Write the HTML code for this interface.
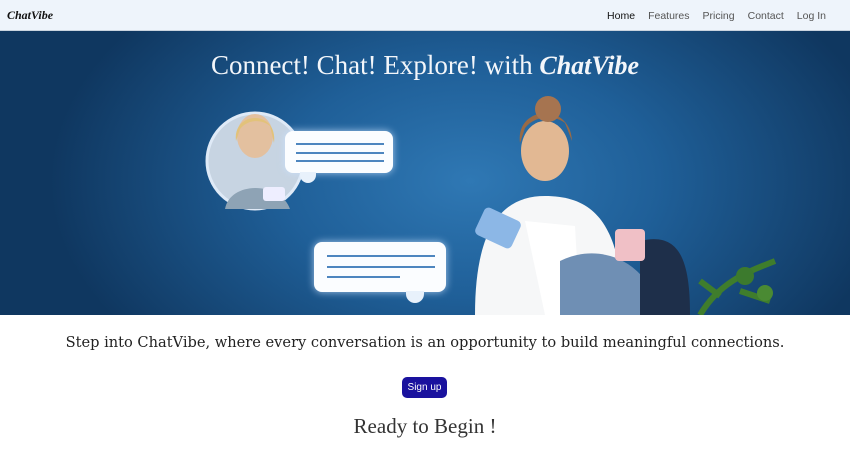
<!DOCTYPE html>
<html><head><meta charset="utf-8"><style>
*{margin:0;padding:0;box-sizing:border-box}
body{width:850px;height:473px;overflow:hidden;background:#fff;font-family:"Liberation Sans",sans-serif;position:relative}
.nav{position:absolute;top:0;left:0;width:850px;height:31px;background:#eef4fb;border-bottom:1px solid #c9d3de}
.logo{position:absolute;left:7px;top:8px;font:italic bold 12px "Liberation Serif",serif;color:#111}
.links{position:absolute;right:24px;top:10px;font-size:10.5px;color:#555}
.links span{margin-left:13px}
.links .h{color:#111}
.hero{position:absolute;top:31px;left:0;width:850px;height:284px;background:radial-gradient(ellipse 420px 260px at 470px 150px,#2f78b4 0%,#1f5f98 45%,#14426f 85%,#0f3760 100%);overflow:hidden}
h1{position:absolute;top:50px;left:0;width:850px;text-align:center;font:400 27px "Liberation Serif",serif;color:#f3f6fa}
h1 b{font-style:italic;font-size:26px}
.bub{position:absolute;background:#fbfdff;border-radius:8px;box-shadow:0 0 8px rgba(200,225,255,.8)}
.bub i{position:absolute;left:10%;height:2px;background:#4e86bf}
p.t{position:absolute;top:334px;width:850px;text-align:center;font:14.6px "DejaVu Serif","Liberation Serif",serif;color:#222}
.btn{position:absolute;left:402px;top:377px;width:45px;height:21px;background:#1a129e;border-radius:5px;color:#fff;font-size:10px;text-align:center;line-height:21px}
p.r{position:absolute;top:414px;width:850px;text-align:center;font:21px "Liberation Serif",serif;color:#333}
</style></head><body>
<div class="nav"><div class="logo">ChatVibe</div>
<div class="links"><span class="h">Home</span><span>Features</span><span>Pricing</span><span>Contact</span><span>Log In</span></div></div>
<div class="hero">
<svg width="850" height="284" style="position:absolute;left:0;top:0">
<circle cx="255" cy="130" r="48" fill="#c7d4e2" stroke="#dfeaf7" stroke-width="3"/>
<path d="M225 178 C230 150 280 150 290 178Z" fill="#8ea3b5"/>
<ellipse cx="255" cy="105" rx="18" ry="22" fill="#e3c09f"/>
<path d="M236 110 C232 80 278 78 274 112 L270 95 C262 88 248 88 240 98Z" fill="#e2c27a"/>
<rect x="263" y="156" width="22" height="14" rx="3" fill="#eef"/>
<ellipse cx="545" cy="120" rx="24" ry="30" fill="#e2b893"/>
<path d="M520 112 C515 75 570 70 572 110 L565 92 C555 84 535 84 525 97Z" fill="#9a6a45"/>
<circle cx="548" cy="78" r="13" fill="#a67450"/>
<path d="M475 284 C475 200 500 165 545 165 C600 165 620 200 625 284Z" fill="#f6f7f8"/>
<path d="M525 190 L545 284 L580 284 L575 195Z" fill="#fff"/>
<path d="M560 230 C600 210 650 230 660 284 L560 284Z" fill="#6f8fb4"/>
<path d="M640 210 C680 200 690 230 690 284 L640 284Z" fill="#1e2f4a"/>
<rect x="478" y="182" width="40" height="30" rx="5" fill="#8cb7e6" transform="rotate(25 498 197)"/>
<rect x="615" y="198" width="30" height="32" rx="4" fill="#f0c0c6"/>
<path d="M700 284 C720 250 750 240 775 230 M740 260 L770 270 M720 265 L700 250" stroke="#3f7d2c" stroke-width="6" fill="none"/>
<circle cx="745" cy="245" r="9" fill="#3c7a2d"/><circle cx="765" cy="262" r="8" fill="#4a8a33"/>
</svg>
<div class="bub" style="left:285px;top:100px;width:108px;height:42px"><i style="top:12px;width:82%"></i><i style="top:21px;width:82%"></i><i style="top:29px;width:82%"></i></div>
<div class="bub" style="left:314px;top:211px;width:132px;height:50px"><i style="top:13px;width:82%"></i><i style="top:24px;width:82%"></i><i style="top:34px;width:55%"></i></div>
<div style="position:absolute;left:406px;top:260px;width:18px;height:12px;border-radius:0 0 9px 9px;background:#e8f1fb"></div>
<div style="position:absolute;left:300px;top:141px;width:16px;height:11px;border-radius:0 0 8px 8px;background:#e8f1fb"></div>
</div>
<h1>Connect! Chat! Explore! with <b>ChatVibe</b></h1>
<p class="t">Step into ChatVibe, where every conversation is an opportunity to build meaningful connections.</p>
<div class="btn">Sign up</div>
<p class="r">Ready to Begin !</p>
</body></html>
